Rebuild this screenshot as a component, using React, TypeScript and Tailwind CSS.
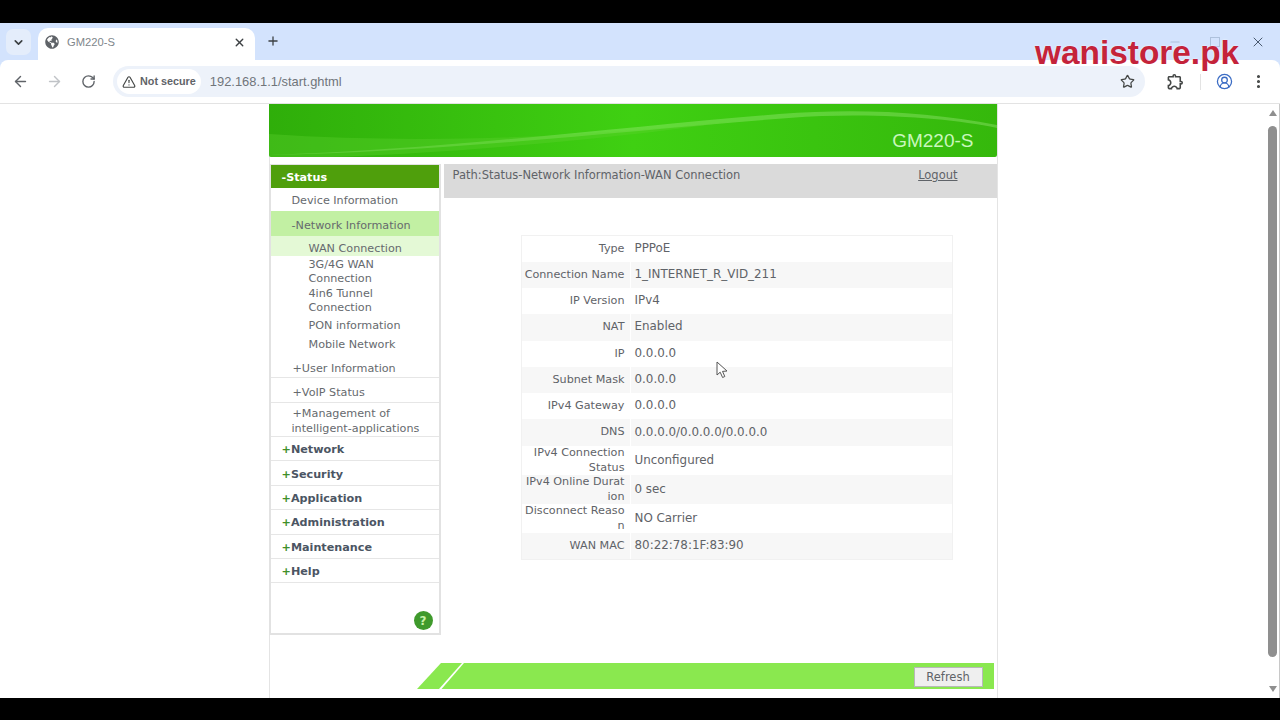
import React from 'react';
import { ArrowLeft, ArrowRight, RotateCw, TriangleAlert, Star, CircleUserRound, EllipsisVertical, ChevronDown, X, Plus, Minus } from 'lucide-react';
import { FaGlobeAmericas } from 'react-icons/fa';
import { MdOutlineExtension } from 'react-icons/md';

const rows = [
  { h: 'h-[26px]', label: ['Type'], value: 'PPPoE' },
  { h: 'h-[26px]', label: ['Connection Name'], value: '1_INTERNET_R_VID_211' },
  { h: 'h-[26px]', label: ['IP Version'], value: 'IPv4' },
  { h: 'h-[26.5px]', label: ['NAT'], value: 'Enabled' },
  { h: 'h-[26.5px]', label: ['IP'], value: '0.0.0.0' },
  { h: 'h-[26px]', label: ['Subnet Mask'], value: '0.0.0.0' },
  { h: 'h-[26px]', label: ['IPv4 Gateway'], value: '0.0.0.0' },
  { h: 'h-[27px]', label: ['DNS'], value: '0.0.0.0/0.0.0.0/0.0.0.0' },
  { h: 'h-[29px]', label: ['IPv4 Connection', 'Status'], value: 'Unconfigured' },
  { h: 'h-[29px]', label: ['IPv4 Online Durat', 'ion'], value: '0 sec' },
  { h: 'h-[29px]', label: ['Disconnect Reaso', 'n'], value: 'NO Carrier' },
  { h: 'h-[26px]', label: ['WAN MAC'], value: '80:22:78:1F:83:90' },
];

const topMenus = ['Network', 'Security', 'Application', 'Administration', 'Maintenance', 'Help'];

const Sidebar = () => (
  <aside className="w-[172px] h-[471px] -ml-[1px] shrink-0 border-x-2 border-b-2 border-t border-[#e2e2e2] flex flex-col text-[#666a6e] text-[11.2px]">
    <div className="h-[23px] shrink-0 bg-[#4f9f0c] pl-[11px] pt-[3px] flex items-center font-bold text-white">-Status</div>
    <div className="h-[23px] shrink-0 pl-[21px] pt-[3px] flex items-center">Device Information</div>
    <div className="h-[25px] shrink-0 pl-[21px] pt-[5px] flex items-center bg-[#c2f0a3]">-Network Information</div>
    <div className="h-[20px] shrink-0 pl-[38px] pt-[6px] flex items-center bg-[#e4f9d6]">WAN Connection</div>
    <div className="pl-[38px] pt-[2px] leading-[14px] h-[29px] shrink-0">3G/4G WAN<br />Connection</div>
    <div className="pl-[38px] pt-[2px] leading-[14px] h-[30px] shrink-0">4in6 Tunnel<br />Connection</div>
    <div className="h-[20px] shrink-0 pl-[38px] pt-[2px] flex items-center">PON information</div>
    <div className="h-[19px] shrink-0 pl-[38px] pt-[1px] flex items-center">Mobile Network</div>
    <div className="h-[24px] shrink-0 pl-[22px] pt-[8px] flex items-center border-b border-[#e6e6e6]">+User Information</div>
    <div className="h-[24.5px] shrink-0 pl-[22px] pt-[8px] flex items-center border-b border-[#e6e6e6]">+VoIP Status</div>
    <div className="h-[34.5px] shrink-0 pl-[21px] leading-[15px] border-b border-[#e6e6e6] whitespace-nowrap pt-[3px]"><span className="pl-[1px]">+Management of</span><br />intelligent-applications</div>
    {topMenus.map((m) => (
      <div key={m} className="h-[24.4px] shrink-0 pl-[11px] pt-[4px] flex items-center font-bold text-[#4b5563] border-b border-[#e6e6e6]">
        <span className="text-[#3f8f2a]">+</span>{m}
      </div>
    ))}
    <div className="flex-1 flex items-end justify-end pr-[6px] pb-[3px]">
      <div className="w-[19px] h-[19px] rounded-full bg-[#3f9a2c] text-[#c9f2a8] font-bold text-[12px] flex items-center justify-center">?</div>
    </div>
  </aside>
);

const Content = () => (
  <section className="flex-1 ml-[3px] flex flex-col">
    <div className="h-[34px] bg-[#dadada] pl-[9px] pr-[39px] pb-[11px] flex items-center justify-between">
      <span>Path:Status-Network Information-WAN Connection</span>
      <span className="underline">Logout</span>
    </div>
    <div className="mt-[37px] ml-[77px] w-[432px] border border-[#f1f1f1]">
      {rows.map((r, i) => (
        <div key={r.label[0]} className={`flex items-center ${r.h} ${i % 2 === 1 ? 'bg-[#f7f7f7]' : 'bg-white'}`}>
          <div className="w-[108px] pr-[5px] text-right text-[11.2px] leading-[14.5px] whitespace-nowrap">
            {r.label.map((l) => <div key={l}>{l}</div>)}
          </div>
          <div className="pl-[4px] border-l border-white self-stretch flex items-center text-[11.9px]">{r.value}</div>
        </div>
      ))}
    </div>
  </section>
);

const Header = () => (
  <header className="relative h-[53px] -ml-[1px] rounded-b-[2px] overflow-hidden bg-gradient-to-r from-[#2fae0a] via-[#3fd012] to-[#35b80c] flex items-end justify-end pr-[23px] pb-[4px]">
    <svg className="absolute inset-0 w-full h-full" viewBox="0 0 728 53" preserveAspectRatio="none">
      <path d="M0 51 C180 48 360 26 520 14 C600 8 680 14 728 24 L728 21 C660 8 590 4 510 10 C360 22 170 46 0 51Z" fill="#b8f59a" opacity="0.3" />
      <path d="M0 53 L0 30 C150 40 300 34 460 18 C320 38 160 50 60 53Z" fill="#5fd032" opacity="0.35" />
    </svg>
    <span className="relative font-['Liberation_Sans',sans-serif] text-[19px] leading-[24px] text-[#c9f7bd]">GM220-S</span>
  </header>
);

const Footer = () => (
  <div className="mt-[28px] flex justify-end pr-[3px]">
    <svg width="48" height="26" viewBox="0 0 48 26" className="shrink-0">
      <polygon points="0,26 24,0 45,0 22,26" fill="#8ae84f" />
      <polygon points="24.5,26 47,0 48,0 48,26" fill="#8ae84f" />
    </svg>
    <div className="w-[529px] h-[26px] bg-[#8ae84f] flex items-center justify-end pr-[11px]">
      <button className="w-[69px] h-[20px] mt-[1px] bg-[#efefef] border border-[#b8b8b8] text-[#5f6368] text-center leading-[18px]">Refresh</button>
    </div>
  </div>
);

export default function App() {
  return (
    <div className="relative w-[1280px] h-[720px] overflow-hidden flex flex-col bg-black font-['DejaVu_Sans',sans-serif] text-[11.5px] text-[#5f6368]">
      <div className="h-[23px] shrink-0 bg-black" />

      {/* tab strip */}
      <div className="h-[37px] shrink-0 bg-[#d3e3fd] flex items-end pl-[6px] text-[#444746] font-['Liberation_Sans',sans-serif]">
        <div className="w-[25px] h-[26px] mb-[5px] rounded-[7px] bg-[#e4edfb] flex items-center justify-center">
          <ChevronDown size={13} strokeWidth={3} className="text-[#3c4043]" />
        </div>
        <div className="w-[217px] h-[32px] ml-[7px] rounded-t-[10px] bg-white flex items-center pl-[7px] pr-[9px] pb-[4px]">
          <FaGlobeAmericas size={14} className="text-[#5f6368]" />
          <span className="ml-[8px] flex-1 text-[11.2px] text-[#80868b]">GM220-S</span>
          <X size={13} strokeWidth={2.5} className="text-[#3c4043]" />
        </div>
        <Plus size={14} strokeWidth={2.2} className="ml-[11px] mb-[12px] text-[#3c4043]" />
        <div className="flex-1 flex items-center justify-end pr-[14px] gap-[28px] mb-[10px] text-[#8aa0bc]">
          <Minus size={14} className="opacity-50" />
          <div className="w-[10px] h-[10px] border border-[#8aa0bc] opacity-50 mr-[2px]" />
          <X size={16} strokeWidth={1.5} className="text-[#4a5a70]" />
        </div>
      </div>

      {/* toolbar */}
      <div className="h-[44px] shrink-0 bg-[#d3e3fd]">
        <div className="h-full bg-white border-b border-[#e3e3e3] rounded-t-[8px] flex items-center pl-[12px] pr-[12px] font-['Liberation_Sans',sans-serif]">
          <ArrowLeft size={17} strokeWidth={2} className="text-[#5f6368]" />
          <ArrowRight size={17} strokeWidth={2} className="ml-[17px] text-[#c0c3c7]" />
          <RotateCw size={15} strokeWidth={2.2} className="ml-[18px] text-[#5f6368]" />
          <div className="ml-[17px] w-[1032px] h-[31px] rounded-full bg-[#edf2fa] flex items-center pl-[4px] pr-[10px]">
            <div className="h-[25px] px-[5px] rounded-full bg-white flex items-center gap-[4px] text-[10.8px] font-bold text-[#5f6368]">
              <TriangleAlert size={14} strokeWidth={2} className="text-[#444746]" />
              Not secure
            </div>
            <span className="ml-[9px] pt-[1px] flex-1 text-[12.9px] text-[#70757a]">192.168.1.1/start.ghtml</span>
            <Star size={15} strokeWidth={2} className="text-[#444746]" />
          </div>
          <MdOutlineExtension size={19} className="ml-[21px] text-[#444746]" />
          <div className="ml-[15px] w-[1px] h-[16px] bg-[#e3e3e3]" />
          <CircleUserRound size={17} strokeWidth={1.8} className="ml-[15px] text-[#3b6cc4]" />
          <EllipsisVertical size={17} strokeWidth={2.4} className="ml-[17px] text-[#444746]" />
        </div>
      </div>

      {/* page */}
      <div className="flex-1 min-h-0 bg-white flex">
        <div className="flex-1 flex justify-center">
          <main className="w-[729px] h-full border-x border-[#e4e4e4]">
            <Header />
            <div className="mt-[7px] flex">
              <Sidebar />
              <Content />
            </div>
            <Footer />
          </main>
        </div>
        <div className="w-[14px] shrink-0 flex flex-col items-center pt-[6px] pb-[6px] border-r border-[#c8c8c8]">
          <div className="w-0 h-0 border-x-[4px] border-x-transparent border-b-[6px] border-b-[#8f8f8f]" />
          <div className="mt-[10px] w-[9px] h-[531px] rounded-full bg-[#8f8f8f]" />
          <div className="mt-auto w-0 h-0 border-x-[4px] border-x-transparent border-t-[6px] border-t-[#8f8f8f]" />
        </div>
      </div>

      <div className="h-[22px] shrink-0 bg-black" />

      {/* video watermark */}
      <span className="absolute left-[1035px] top-[34px] font-['Liberation_Sans',sans-serif] font-bold text-[33.4px] leading-[38px] text-[#c4233a] [text-shadow:0_0_2px_#ffffff]">wanistore.pk</span>

      {/* mouse pointer */}
      <svg className="absolute left-[716px] top-[361px]" width="13" height="18" viewBox="0 0 13 18">
        <path d="M1 1 L1 14 L4.2 11.2 L6.6 16.5 L8.8 15.5 L6.5 10.4 L11 10 Z" fill="#ffffff" stroke="#555555" strokeWidth="1" />
      </svg>
    </div>
  );
}
